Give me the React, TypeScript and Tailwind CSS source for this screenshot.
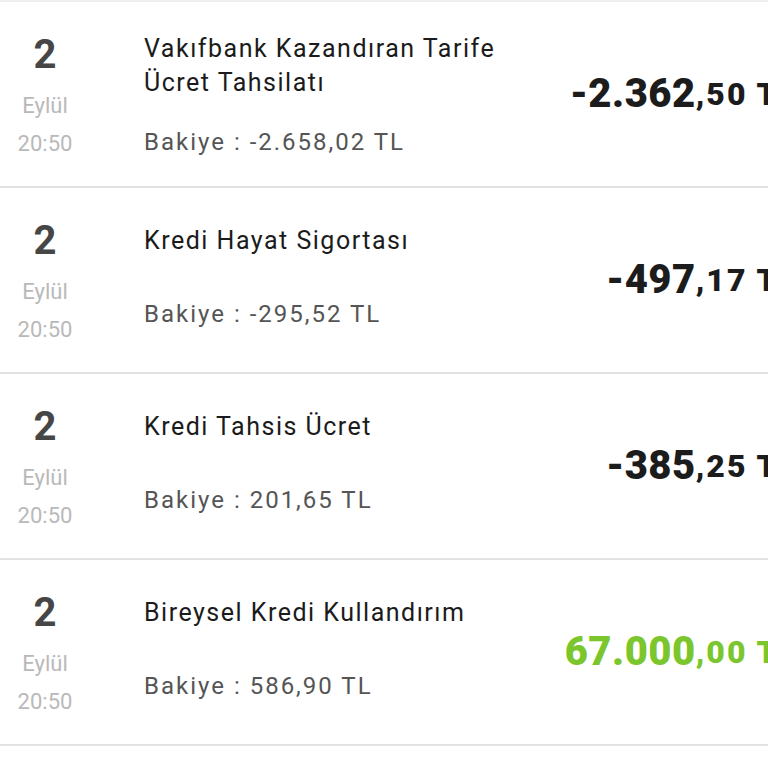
import React from 'react';

type Tx = {
  day: string;
  month: string;
  time: string;
  title: string;
  balance: string;
  whole: string;
  cents: string;
  income?: boolean;
  twoLine?: boolean;
};

const items: Tx[] = [
  { day: '2', month: 'Eylül', time: '20:50', title: 'Vakıfbank Kazandıran Tarife Ücret Tahsilatı', balance: 'Bakiye : -2.658,02 TL', whole: '-2.362', cents: ',50 TL', twoLine: true },
  { day: '2', month: 'Eylül', time: '20:50', title: 'Kredi Hayat Sigortası', balance: 'Bakiye : -295,52 TL', whole: '-497', cents: ',17 TL' },
  { day: '2', month: 'Eylül', time: '20:50', title: 'Kredi Tahsis Ücret', balance: 'Bakiye : 201,65 TL', whole: '-385', cents: ',25 TL' },
  { day: '2', month: 'Eylül', time: '20:50', title: 'Bireysel Kredi Kullandırım', balance: 'Bakiye : 586,90 TL', whole: '67.000', cents: ',00 TL', income: true },
];

const Row = ({ tx }: { tx: Tx }) => (
  <div className="h-[186px] flex border-b-2 border-[#e2e2e2]">
    {/* date */}
    <div className="w-[90px] shrink-0 flex flex-col items-center pt-[33px]">
      <span className="text-[40px] leading-[40px] font-bold text-[#464646]">{tx.day}</span>
      <span className="mt-[20px] text-[22px] leading-[22px] text-[#b9b9b9]">{tx.month}</span>
      <span className="mt-[16px] text-[22px] leading-[22px] text-[#b9b9b9]">{tx.time}</span>
    </div>

    {/* description */}
    <div className={`ml-[54px] flex-1 min-w-0 flex flex-col ${tx.twoLine ? 'pt-[30px]' : 'pt-[36px]'}`}>
      <span className="text-[25px] leading-[34px] tracking-[1.5px] text-[#1b1b1b]">{tx.title}</span>
      <span className={`text-[24px] leading-[34px] tracking-[2px] text-[#555555] ${tx.twoLine ? 'mt-[25px]' : 'mt-[39px]'}`}>{tx.balance}</span>
    </div>

    {/* amount */}
    <div className={`shrink-0 -mr-[30px] pl-4 flex items-center font-black whitespace-nowrap ${tx.income ? 'text-[#7bc62d]' : 'text-[#1c1c1c]'}`}>
      <span className="text-[40px] leading-none tracking-[0.5px]">{tx.whole}</span>
      <span className="text-[32px] leading-none tracking-[2px]">{tx.cents}</span>
    </div>
  </div>
);

export default function App() {
  return (
    <div className="w-[768px] h-[768px] overflow-hidden bg-white border-t-2 border-[#efefef] font-['Roboto',sans-serif]">
      {items.map((tx, i) => (
        <Row key={i} tx={tx} />
      ))}
    </div>
  );
}
